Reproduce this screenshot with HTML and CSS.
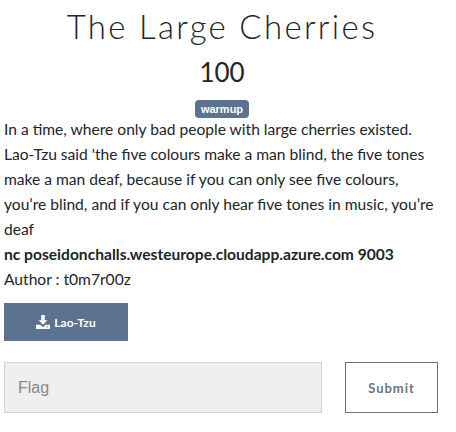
FILE: index.html
```html
<!DOCTYPE html>
<html>
<head>
<meta charset="utf-8">
<link rel="stylesheet" href="styles.css">
</head>
<body>
<div class="modal">
  <h2 class="title">The Large Cherries</h2>
  <h3 class="value">100</h3>
  <div class="tags"><span class="badge">warmup</span></div>
  <div class="desc">
    <p>In a time, where only bad people with large cherries existed.<br>Lao-Tzu said 'the five colours make a man blind, the five tones make a man deaf, because if you can only see five colours, you’re blind, and if you can only hear five tones in music, you’re deaf<br><strong>nc poseidonchalls.westeurope.cloudapp.azure.com 9003</strong><br>Author : t0m7r00z</p>
  </div>
  <div class="files">
    <a class="btn-file" href="#">
      <svg class="dl" viewBox="0 0 16 16" width="14" height="14"><path d="M6 0h4v6h3l-5 5-5-5h3z" fill="#fff"/><path d="M0 11h5l3 3 3-3h5v5H0z" fill="#fff"/><rect x="12" y="13" width="2" height="1" fill="#5b7290"/></svg>
      <span>Lao-Tzu</span>
    </a>
  </div>
  <form class="submit-row">
    <input class="flag" type="text" placeholder="Flag">
    <button class="btn-submit" type="button">Submit</button>
  </form>
</div>
</body>
</html>
```
FILE: styles.css
```css
html, body { margin: 0; padding: 0; background: #fff; }
body { font-family: "Lato", sans-serif; color: #212529; }
.modal { width: 440px; padding: 0 0 0 4px; box-sizing: border-box; }
.title {
  margin: 0; padding-top: 6px;
  text-align: center; font-weight: 300; font-size: 33px; line-height: 40px;
  letter-spacing: 2.3px; color: #212529;
  font-family: "Lato", sans-serif;
}
.value {
  margin: 10px 0 0; text-align: center; font-weight: 400; font-size: 26px; line-height: 32px;
}
.tags { text-align: center; margin-top: 10px; line-height: 18px; height: 18px; }
.badge {
  display: inline-block; background: #5b7290; color: #fff; font-weight: 700;
  font-family: "Liberation Sans", Arial, sans-serif;
  font-size: 11px; line-height: 18px; padding: 0 6px; border-radius: 4px;
}
.desc p { margin: 1px 0 0; font-size: 15.6px; line-height: 25px; }
.desc strong { font-weight: 700; }
.files { margin-top: 11px; }
.btn-file {
  display: inline-flex; align-items: center; justify-content: center; gap: 4px;
  width: 124px; height: 38px; background: #5b7290; color: #fff;
  text-decoration: none; font-weight: 700; font-size: 12px;
}
.submit-row { display: flex; gap: 23px; margin-top: 21px; }
.flag {
  width: 318px; height: 51px; box-sizing: border-box; margin: 0;
  background: #efefef; border: 1px solid #ced4da; padding: 0 13px;
  font-family: "Liberation Sans", Arial, sans-serif; font-size: 16px; color: #333;
}
.flag::placeholder { color: #888; }
.btn-submit {
  width: 93px; height: 51px; box-sizing: border-box; margin: 0;
  background: #fff; border: 1px solid #6c757d; color: #6c757d;
  font-family: "Lato", sans-serif; font-weight: 700; font-size: 13px; letter-spacing: 1px;
}
```
